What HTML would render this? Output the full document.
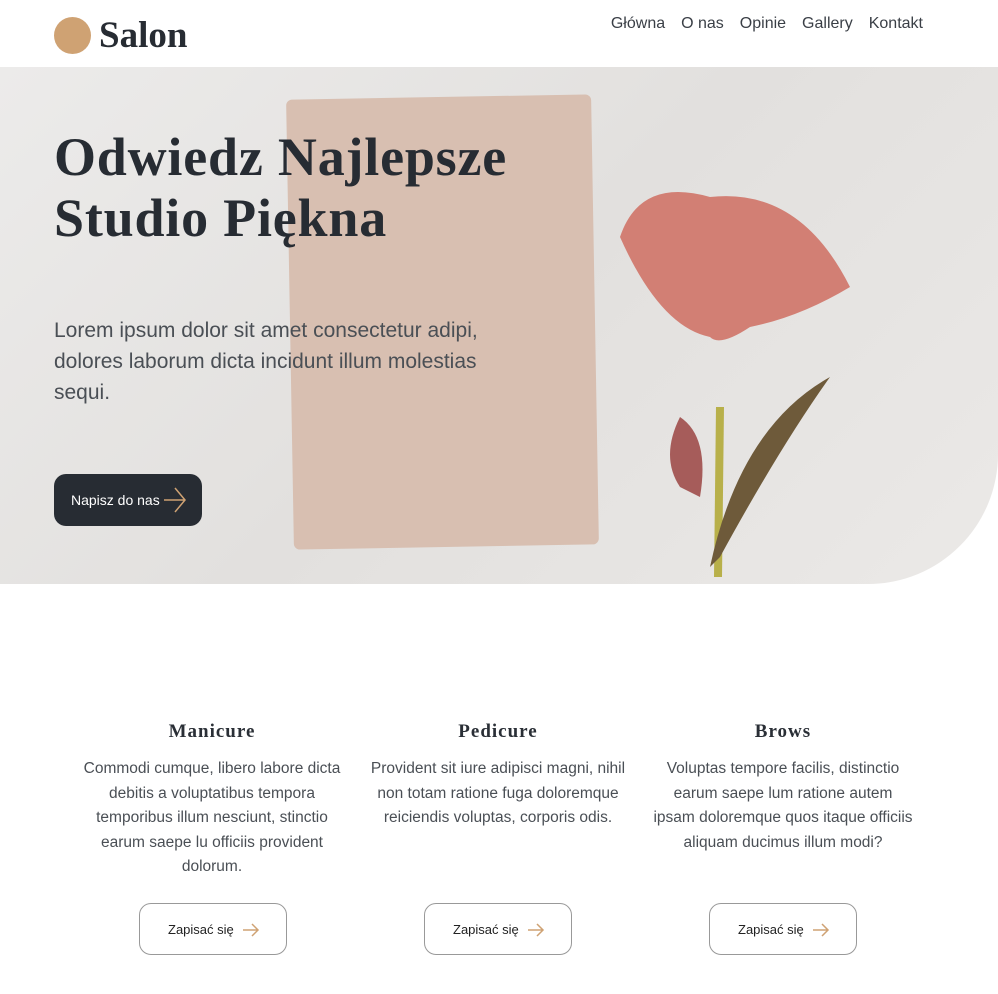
<!DOCTYPE html>
<html><head><meta charset="utf-8"><style>
*{margin:0;padding:0;box-sizing:border-box}
body{width:998px;height:994px;background:#fff;font-family:"Liberation Sans",sans-serif;color:#2a2f36;position:relative;overflow:hidden}
.logo{position:absolute;left:54px;top:14px;display:flex;align-items:center}
.logo i{width:37px;height:37px;border-radius:50%;background:#cfa273;display:block}
.logo span{font-family:"Liberation Serif",serif;font-weight:bold;font-size:37px;margin-left:8px;color:#272c33;letter-spacing:0px}
nav{position:absolute;top:15px;right:75px;font-size:16px;color:#3a3f46}
nav a{margin-left:16px}
.hero{position:absolute;left:0;top:67px;width:998px;height:517px;background:linear-gradient(135deg,#ecebea,#e2e0de 50%,#ebe9e7);border-bottom-right-radius:130px;overflow:hidden}
.paper{position:absolute;left:290px;top:30px;width:305px;height:450px;background:#d8bfb1;border-radius:6px;transform:rotate(-1deg)}
h1{position:absolute;left:54px;top:127px;font-family:"Liberation Serif",serif;font-weight:bold;font-size:54px;line-height:61px;color:#272c33;letter-spacing:0.8px}
.lead{position:absolute;left:54px;top:315px;font-size:21px;line-height:31px;color:#4a4f55;width:470px}
.btn{position:absolute;left:54px;top:474px;width:148px;height:52px;border-radius:12px;background:#272c33;color:#fff;font-size:14px;padding:18px 0 0 17px}
.card{position:absolute;top:721px;width:260px;text-align:center}
.card h3{font-family:"Liberation Serif",serif;font-size:19px;letter-spacing:1px;color:#2a2f36;margin-bottom:14px}
.card p{font-size:15.5px;line-height:24.5px;color:#4a4f55}
.ob{position:absolute;top:903px;width:148px;height:52px;border:1px solid #999;border-radius:12px;font-size:13px;padding:18px 0 0 28px;color:#222}
.ob svg{position:absolute;left:102px;top:19px}
</style></head><body>
<div class="logo"><i></i><span>Salon</span></div>
<nav><a>Główna</a><a>O nas</a><a>Opinie</a><a>Gallery</a><a>Kontakt</a></nav>
<div class="hero">
<div class="paper"></div>
<svg style="position:absolute;left:600px;top:110px" width="260" height="420">
<path d="M120 230 L118 400" stroke="#b8b04a" stroke-width="8" fill="none"/>
<path d="M110 390 Q140 250 230 200 Q180 270 120 380" fill="#6e5a3a"/>
<path d="M20 60 Q40 0 110 20 Q200 10 250 110 Q200 140 150 150 Q120 170 110 160 Q60 150 20 60Z" fill="#d27f74"/>
<path d="M80 310 Q60 280 80 240 Q110 260 100 320Z" fill="#a65c5a"/>
</svg>
</div>
<h1>Odwiedz Najlepsze<br>Studio Piękna</h1>
<div class="lead">Lorem ipsum dolor sit amet consectetur adipi, dolores laborum dicta incidunt illum molestias sequi.</div>
<div class="btn">Napisz do nas <svg style="position:absolute;left:109px;top:12px" width="24" height="28"><path d="M1 14H22M12 2L22 14L12 26" stroke="#cfa273" stroke-width="1.5" fill="none"/></svg></div>
<div class="card" style="left:82px"><h3>Manicure</h3><p>Commodi cumque, libero labore dicta debitis a voluptatibus tempora temporibus illum nesciunt, stinctio earum saepe lu officiis provident dolorum.</p></div>
<div class="card" style="left:368px"><h3>Pedicure</h3><p>Provident sit iure adipisci magni, nihil non totam ratione fuga doloremque reiciendis voluptas, corporis odis.</p></div>
<div class="card" style="left:653px"><h3>Brows</h3><p>Voluptas tempore facilis, distinctio earum saepe lum ratione autem ipsam doloremque quos itaque officiis aliquam ducimus illum modi?</p></div>
<div class="ob" style="left:139px">Zapisać się <svg width="18" height="14"><path d="M1 7H16M10 1L16 7L10 13" stroke="#cfa273" stroke-width="1.5" fill="none"/></svg></div>
<div class="ob" style="left:424px">Zapisać się <svg width="18" height="14"><path d="M1 7H16M10 1L16 7L10 13" stroke="#cfa273" stroke-width="1.5" fill="none"/></svg></div>
<div class="ob" style="left:709px">Zapisać się <svg width="18" height="14"><path d="M1 7H16M10 1L16 7L10 13" stroke="#cfa273" stroke-width="1.5" fill="none"/></svg></div>
</body></html>
